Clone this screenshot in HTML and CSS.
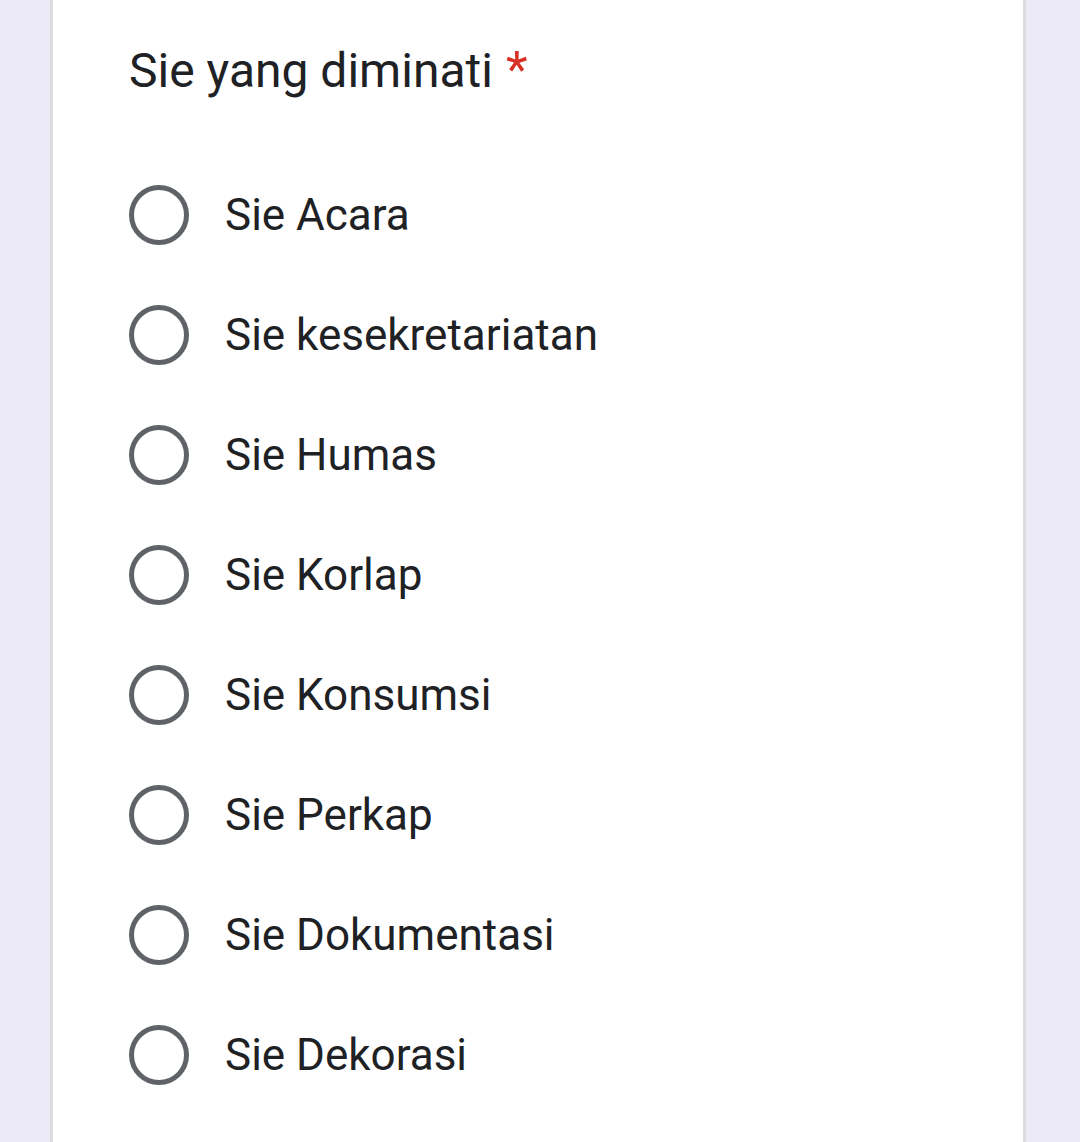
FILE: index.html
```html
<!DOCTYPE html>
<html lang="id">
<head>
<meta charset="utf-8">
<title>Sie yang diminati</title>
<link rel="stylesheet" href="styles.css">
</head>
<body>
<div class="card">
  <div class="title">Sie yang diminati<span class="req">*</span></div>
  <div class="options">
    <label class="option"><span class="radio"></span><span class="label">Sie Acara</span></label>
    <label class="option"><span class="radio"></span><span class="label">Sie kesekretariatan</span></label>
    <label class="option"><span class="radio"></span><span class="label">Sie Humas</span></label>
    <label class="option"><span class="radio"></span><span class="label">Sie Korlap</span></label>
    <label class="option"><span class="radio"></span><span class="label">Sie Konsumsi</span></label>
    <label class="option"><span class="radio"></span><span class="label">Sie Perkap</span></label>
    <label class="option"><span class="radio"></span><span class="label">Sie Dokumentasi</span></label>
    <label class="option"><span class="radio"></span><span class="label">Sie Dekorasi</span></label>
  </div>
</div>
</body>
</html>
```

FILE: styles.css
```css
html, body {
  margin: 0;
  padding: 0;
  background: #edeaf8;
  height: 100%;
  overflow: hidden;
}
body {
  font-family: Roboto, "Liberation Sans", sans-serif;
  color: #202124;
}
.card {
  box-sizing: border-box;
  margin-left: 50px;
  width: 976px;
  min-height: 1142px;
  background: #ffffff;
  border-left: 3px solid #dadce0;
  border-right: 3px solid #dadce0;
  padding: 38px 0 0 76px;
}
.title {
  font-size: 48px;
  line-height: 64px;
  margin-bottom: 52px;
}
.req {
  color: #d93025;
  font-size: 50px;
  margin-left: 13px;
}
.options {
  display: flex;
  flex-direction: column;
}
.option {
  display: flex;
  align-items: center;
  gap: 36px;
  height: 120px;
}
.radio {
  box-sizing: border-box;
  width: 60px;
  height: 60px;
  border: 5px solid #5f6368;
  border-radius: 50%;
  flex: none;
}
.label {
  font-size: 44px;
  line-height: 120px;
}
```
